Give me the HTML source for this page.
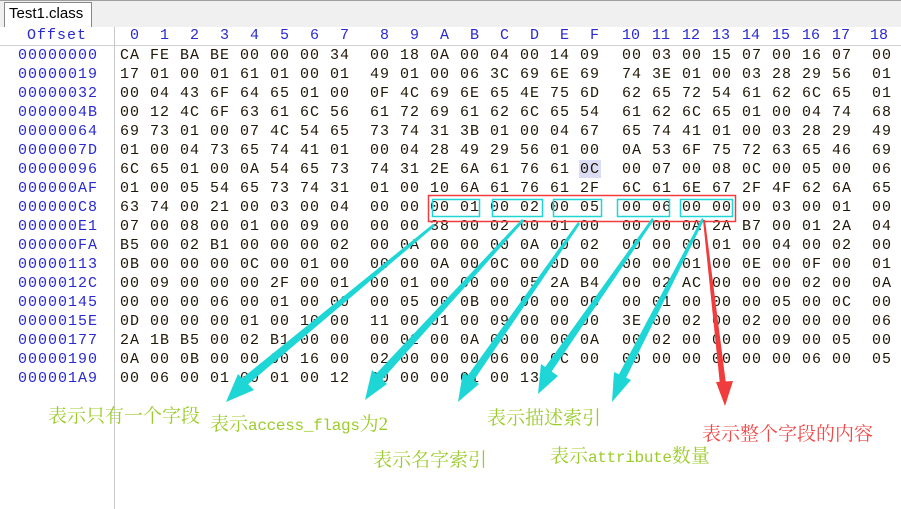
<!DOCTYPE html>
<html><head><meta charset="utf-8"><style>
body{margin:0;width:901px;height:509px;background:#fff;position:relative;overflow:hidden;font-family:"Liberation Mono",monospace;}
.tabbar{position:absolute;left:0;top:0;width:901px;height:27px;background:#f0f0f0;border-top:1px solid #a0a0a0;box-sizing:border-box;}
.tab{position:absolute;left:4px;top:2px;width:88px;height:25px;background:#fff;border:1px solid #888;border-bottom:none;box-sizing:border-box;font-family:"Liberation Sans",sans-serif;font-size:15px;line-height:22px;padding-left:4px;color:#000;}
.sep{position:absolute;left:114px;top:27px;width:1px;height:482px;background:#c8c8c8;}
.hline{position:absolute;left:0;top:45px;width:901px;height:1px;background:#d0d0d0;}
.h{position:absolute;top:27px;font-size:15px;line-height:18px;color:#2a2ad0;}
.r{position:absolute;left:0;height:19px;width:901px;font-size:15px;line-height:19px;letter-spacing:1px;}
.o{position:absolute;left:18px;color:#2a2ad0;}
.g{position:absolute;white-space:pre;color:#201808;}
.lbl{position:absolute;font-family:"Liberation Serif","Noto Serif CJK SC",serif;font-size:19px;white-space:nowrap;}
.lt{font-family:"Liberation Mono",monospace;font-size:16px;letter-spacing:-0.3px;}
</style></head><body>
<div class="tabbar"></div><div class="tab">Test1.class</div>
<div class="hline"></div><div class="sep"></div>
<div class="h" style="left:27px;letter-spacing:1px">Offset</div>
<div class="h" style="left:0;width:901px;height:18px">
<span style="position:absolute;left:130px">0</span><span style="position:absolute;left:160px">1</span><span style="position:absolute;left:190px">2</span><span style="position:absolute;left:220px">3</span><span style="position:absolute;left:250px">4</span><span style="position:absolute;left:280px">5</span><span style="position:absolute;left:310px">6</span><span style="position:absolute;left:340px">7</span><span style="position:absolute;left:380px">8</span><span style="position:absolute;left:410px">9</span><span style="position:absolute;left:440px">A</span><span style="position:absolute;left:470px">B</span><span style="position:absolute;left:500px">C</span><span style="position:absolute;left:530px">D</span><span style="position:absolute;left:560px">E</span><span style="position:absolute;left:590px">F</span><span style="position:absolute;left:622px">10</span><span style="position:absolute;left:652px">11</span><span style="position:absolute;left:682px">12</span><span style="position:absolute;left:712px">13</span><span style="position:absolute;left:742px">14</span><span style="position:absolute;left:772px">15</span><span style="position:absolute;left:802px">16</span><span style="position:absolute;left:832px">17</span><span style="position:absolute;left:870px">18</span></div>
<div style="position:absolute;left:579px;top:160px;width:22px;height:18px;background:#dcdcf4"></div>

<div class="r" style="top:46px"><span class="o">00000000</span><span class="g" style="left:120px">CA FE BA BE 00 00 00 34</span><span class="g" style="left:370px">00 18 0A 00 04 00 14 09</span><span class="g" style="left:622px">00 03 00 15 07 00 16 07</span><span class="g" style="left:872px">00</span></div>
<div class="r" style="top:65px"><span class="o">00000019</span><span class="g" style="left:120px">17 01 00 01 61 01 00 01</span><span class="g" style="left:370px">49 01 00 06 3C 69 6E 69</span><span class="g" style="left:622px">74 3E 01 00 03 28 29 56</span><span class="g" style="left:872px">01</span></div>
<div class="r" style="top:84px"><span class="o">00000032</span><span class="g" style="left:120px">00 04 43 6F 64 65 01 00</span><span class="g" style="left:370px">0F 4C 69 6E 65 4E 75 6D</span><span class="g" style="left:622px">62 65 72 54 61 62 6C 65</span><span class="g" style="left:872px">01</span></div>
<div class="r" style="top:103px"><span class="o">0000004B</span><span class="g" style="left:120px">00 12 4C 6F 63 61 6C 56</span><span class="g" style="left:370px">61 72 69 61 62 6C 65 54</span><span class="g" style="left:622px">61 62 6C 65 01 00 04 74</span><span class="g" style="left:872px">68</span></div>
<div class="r" style="top:122px"><span class="o">00000064</span><span class="g" style="left:120px">69 73 01 00 07 4C 54 65</span><span class="g" style="left:370px">73 74 31 3B 01 00 04 67</span><span class="g" style="left:622px">65 74 41 01 00 03 28 29</span><span class="g" style="left:872px">49</span></div>
<div class="r" style="top:141px"><span class="o">0000007D</span><span class="g" style="left:120px">01 00 04 73 65 74 41 01</span><span class="g" style="left:370px">00 04 28 49 29 56 01 00</span><span class="g" style="left:622px">0A 53 6F 75 72 63 65 46</span><span class="g" style="left:872px">69</span></div>
<div class="r" style="top:160px"><span class="o">00000096</span><span class="g" style="left:120px">6C 65 01 00 0A 54 65 73</span><span class="g" style="left:370px">74 31 2E 6A 61 76 61 0C</span><span class="g" style="left:622px">00 07 00 08 0C 00 05 00</span><span class="g" style="left:872px">06</span></div>
<div class="r" style="top:179px"><span class="o">000000AF</span><span class="g" style="left:120px">01 00 05 54 65 73 74 31</span><span class="g" style="left:370px">01 00 10 6A 61 76 61 2F</span><span class="g" style="left:622px">6C 61 6E 67 2F 4F 62 6A</span><span class="g" style="left:872px">65</span></div>
<div class="r" style="top:198px"><span class="o">000000C8</span><span class="g" style="left:120px">63 74 00 21 00 03 00 04</span><span class="g" style="left:370px">00 00 00 01 00 02 00 05</span><span class="g" style="left:622px">00 06 00 00 00 03 00 01</span><span class="g" style="left:872px">00</span></div>
<div class="r" style="top:217px"><span class="o">000000E1</span><span class="g" style="left:120px">07 00 08 00 01 00 09 00</span><span class="g" style="left:370px">00 00 38 00 02 00 01 00</span><span class="g" style="left:622px">00 00 0A 2A B7 00 01 2A</span><span class="g" style="left:872px">04</span></div>
<div class="r" style="top:236px"><span class="o">000000FA</span><span class="g" style="left:120px">B5 00 02 B1 00 00 00 02</span><span class="g" style="left:370px">00 0A 00 00 00 0A 00 02</span><span class="g" style="left:622px">00 00 00 01 00 04 00 02</span><span class="g" style="left:872px">00</span></div>
<div class="r" style="top:255px"><span class="o">00000113</span><span class="g" style="left:120px">0B 00 00 00 0C 00 01 00</span><span class="g" style="left:370px">00 00 0A 00 0C 00 0D 00</span><span class="g" style="left:622px">00 00 01 00 0E 00 0F 00</span><span class="g" style="left:872px">01</span></div>
<div class="r" style="top:274px"><span class="o">0000012C</span><span class="g" style="left:120px">00 09 00 00 00 2F 00 01</span><span class="g" style="left:370px">00 01 00 00 00 05 2A B4</span><span class="g" style="left:622px">00 02 AC 00 00 00 02 00</span><span class="g" style="left:872px">0A</span></div>
<div class="r" style="top:293px"><span class="o">00000145</span><span class="g" style="left:120px">00 00 00 06 00 01 00 00</span><span class="g" style="left:370px">00 05 00 0B 00 00 00 0C</span><span class="g" style="left:622px">00 01 00 00 00 05 00 0C</span><span class="g" style="left:872px">00</span></div>
<div class="r" style="top:312px"><span class="o">0000015E</span><span class="g" style="left:120px">0D 00 00 00 01 00 10 00</span><span class="g" style="left:370px">11 00 01 00 09 00 00 00</span><span class="g" style="left:622px">3E 00 02 00 02 00 00 00</span><span class="g" style="left:872px">06</span></div>
<div class="r" style="top:331px"><span class="o">00000177</span><span class="g" style="left:120px">2A 1B B5 00 02 B1 00 00</span><span class="g" style="left:370px">00 02 00 0A 00 00 00 0A</span><span class="g" style="left:622px">00 02 00 00 00 09 00 05</span><span class="g" style="left:872px">00</span></div>
<div class="r" style="top:350px"><span class="o">00000190</span><span class="g" style="left:120px">0A 00 0B 00 00 00 16 00</span><span class="g" style="left:370px">02 00 00 00 06 00 0C 00</span><span class="g" style="left:622px">00 00 00 00 00 00 06 00</span><span class="g" style="left:872px">05</span></div>
<div class="r" style="top:369px"><span class="o">000001A9</span><span class="g" style="left:120px">00 06 00 01 00 01 00 12</span><span class="g" style="left:370px">00 00 00 01 00 13</span></div>

<svg width="901" height="509" style="position:absolute;left:0;top:0">
<rect x="428.5" y="195.5" width="307" height="26" fill="none" stroke="#f03c3c" stroke-width="1.5"/>
<g fill="none" stroke="#1ed6d6" stroke-width="1.5">
<rect x="432.5" y="199.5" width="47" height="17"/><rect x="492.5" y="199.5" width="50" height="17"/><rect x="553.5" y="199.5" width="48" height="17"/><rect x="617.5" y="199.5" width="52" height="17"/><rect x="680.5" y="199.5" width="52" height="17"/>
</g>
<g fill="#1ed6d6">
<polygon points="433,224 435,226 246,386 240,380"/><polygon points="226,402 238,374 254,390"/>
<polygon points="522,219 524,221 380,382 373,377"/><polygon points="365,400 372,370 387,384"/>
<polygon points="578,222 580,224 472,383 466,378"/><polygon points="458,402 463,372 479,384"/>
<polygon points="652,218 654,220 550,374 543,370"/><polygon points="538,394 541,364 558,376"/>
<polygon points="702,218 704,220 625,380 618,376"/><polygon points="612,402 614,372 631,380"/>
</g>
<g fill="#f03c3c">
<polygon points="703,220 705,220 726,384 720,385"/><polygon points="725,406 716,382 733,381"/>
</g>
</svg>
<div class="lbl" style="left:48px;top:401px;color:#9ccc2c">表示只有一个字段</div>
<div class="lbl" style="left:210px;top:409px;color:#9ccc2c">表示<span class="lt">access_flags</span>为2</div>
<div class="lbl" style="left:373px;top:445px;color:#9ccc2c">表示名字索引</div>
<div class="lbl" style="left:487px;top:403px;color:#9ccc2c">表示描述索引</div>
<div class="lbl" style="left:550px;top:441px;color:#9ccc2c">表示<span class="lt">attribute</span>数量</div>
<div class="lbl" style="left:702px;top:419px;color:#f04848">表示整个字段的内容</div>
</body></html>
